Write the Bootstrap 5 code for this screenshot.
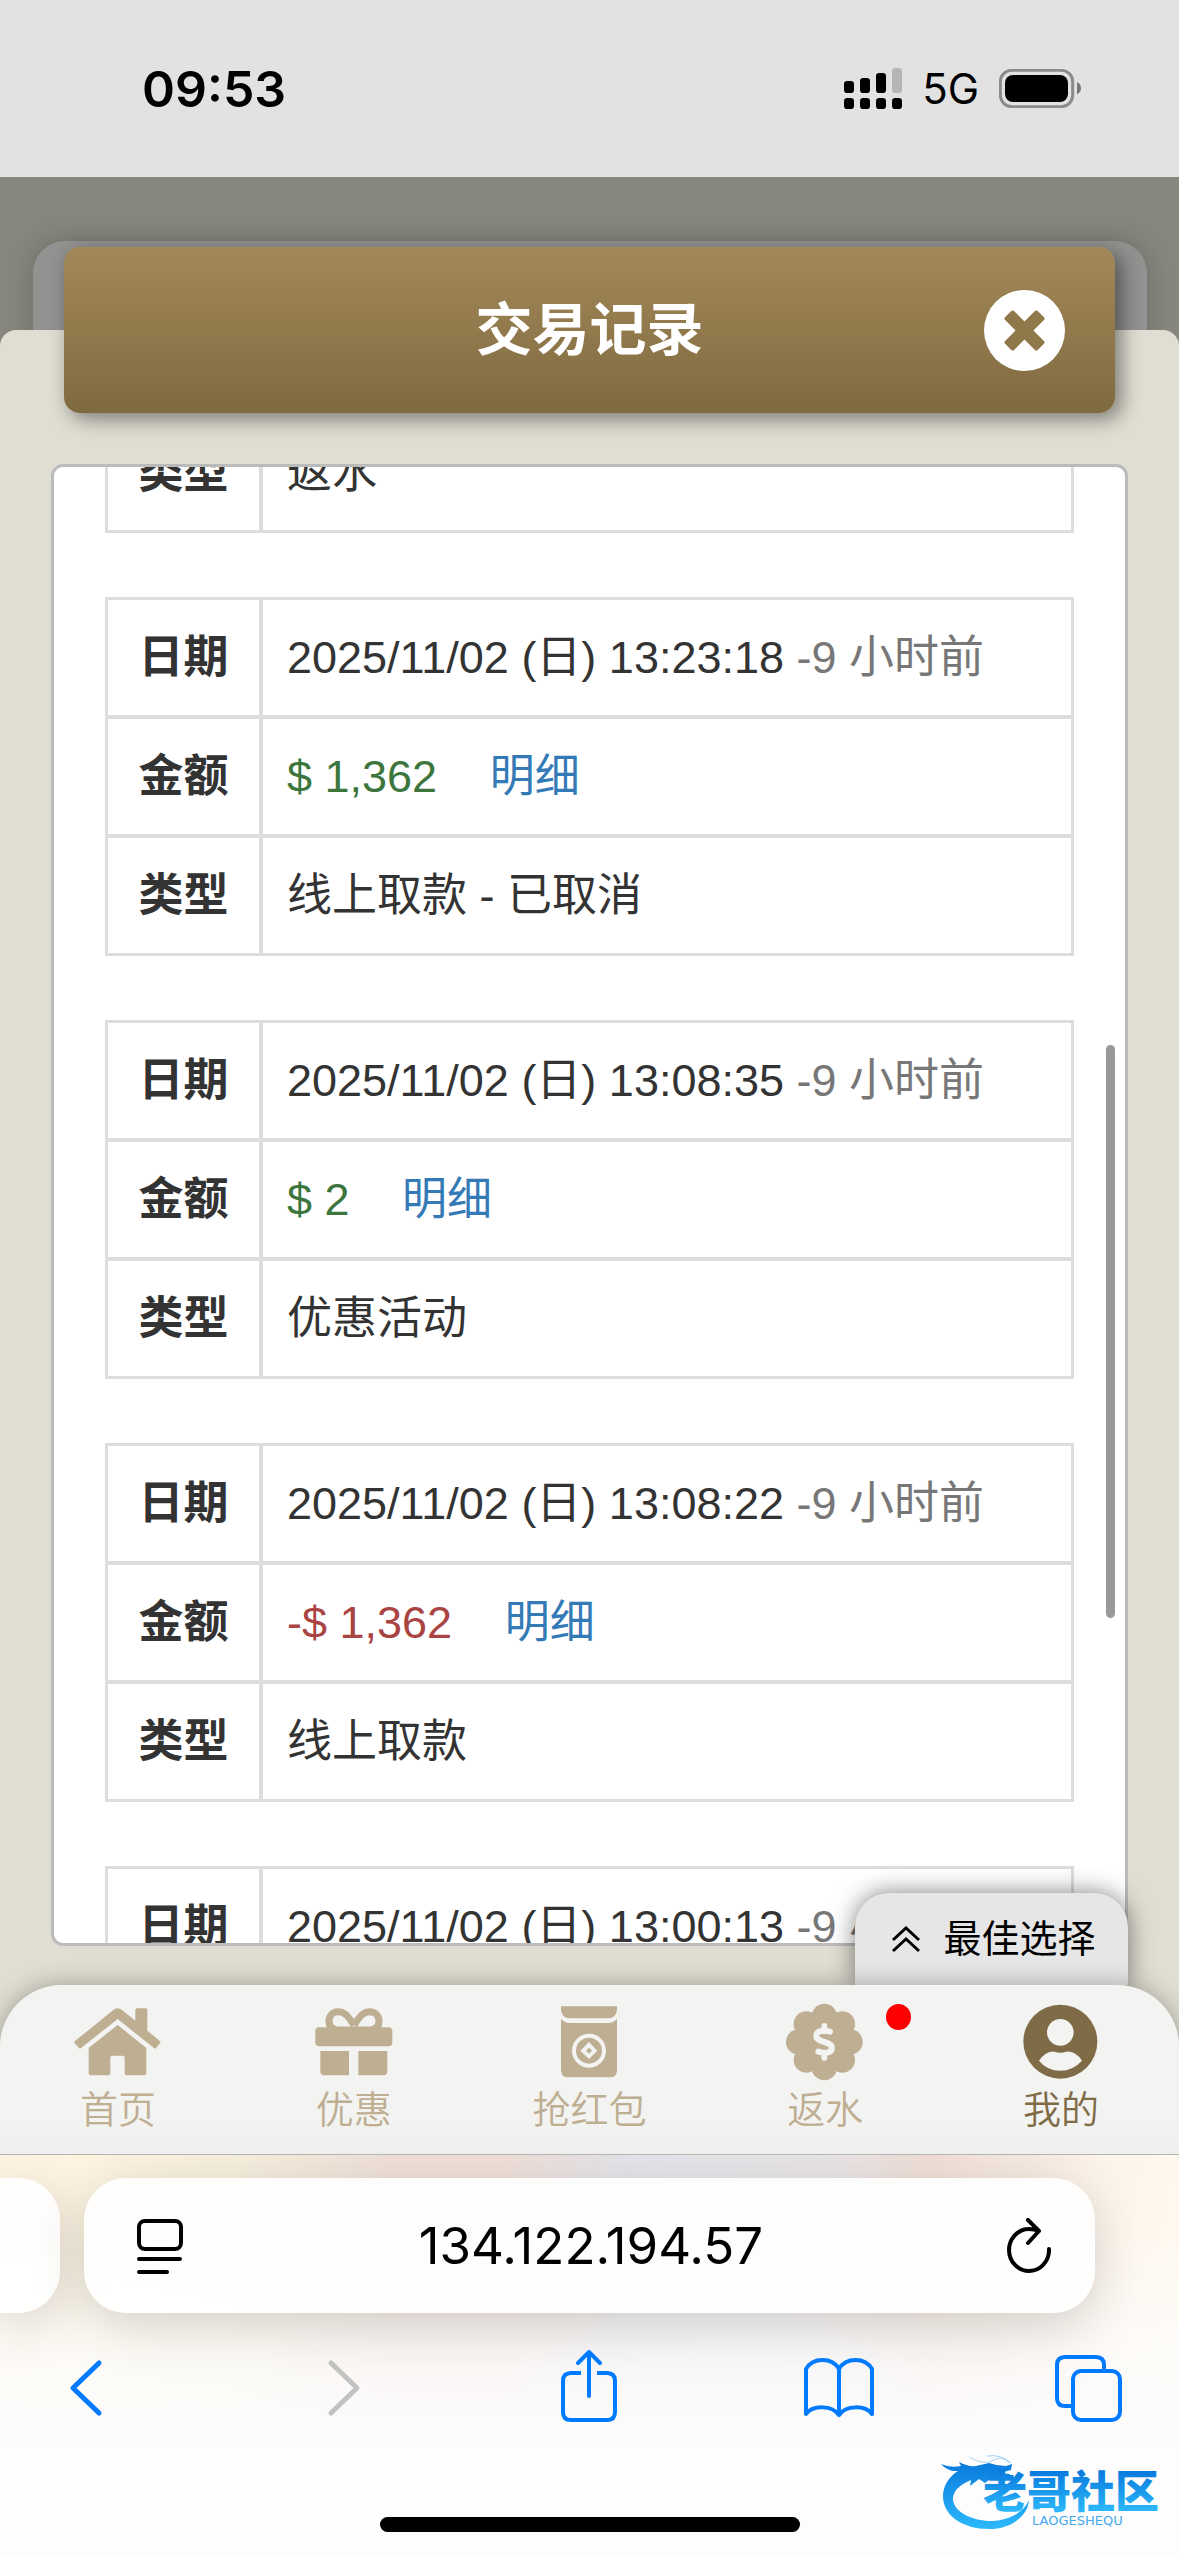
<!DOCTYPE html>
<html lang="zh-CN">
<head>
<meta charset="utf-8">
<meta name="viewport" content="width=device-width, initial-scale=1">
<title>交易记录</title>
<link href="https://cdn.jsdelivr.net/npm/bootstrap@5.3.0/dist/css/bootstrap.min.css" rel="stylesheet">
<style>
  body { font-family: "Liberation Sans", "Noto Sans CJK SC", sans-serif; color: #333; }
  svg { display: block; flex: none; }
  button { border: 0; background: none; padding: 0; }
  .app-shell { height: 100vh; overflow: hidden; background: #87877f; }
  .ios-font { font-family: Inter, "Liberation Sans", sans-serif; color: #000; }

  .status-strip { height: 177px; padding: 0 98px 0 142px; background: #e2e2e2; }
  .status-time { font-size: 50px; line-height: 60px; font-weight: 600; }
  .status-net { font-size: 42px; line-height: 48px; }

  .stage { padding-top: 70px; min-height: 0; }
  .under-sheet { position: absolute; top: 64px; left: 33px; right: 32px; height: 160px; border-radius: 32px 32px 0 0; background: #929291; box-shadow: 0 0 30px rgba(0,0,0,.2); }
  .title-bar { height: 166px; margin: 0 64px; padding: 0 50px; border-radius: 16px; background: linear-gradient(#a38959, #7f6a3f); box-shadow: 6px 6px 20px rgba(0,0,0,.45); z-index: 2; }
  .title-bar h1 { font-size: 57px; line-height: 64px; font-weight: 700; color: #fff; }
  .close-slot { width: 81px; }
  .sheet { margin-top: -83px; padding: 134px 51px 39px; border-radius: 16px 16px 0 0; background: #e0ded2; min-height: 0; position: relative; z-index: 1; }
  .record-panel { border: 3px solid #bbb; border-radius: 12px; background: #fff; min-height: 0; overflow: hidden; }
  .record-list { margin-top: -55px; padding: 0 51px; gap: 64px; }
  .scroll-thumb { position: absolute; right: 10px; top: 578px; width: 9px; height: 573px; border-radius: 5px; background: #999; }

  .record { width: 100%; flex: none; border: 3px solid #ddd; border-collapse: separate; border-spacing: 0; font-size: 45px; line-height: 58px; }
  .record th, .record td { height: 119px; padding: 0 24px; border-bottom: 4px solid #ddd; }
  .record tr:last-child > * { height: 115px; border-bottom: 0; }
  .record th { width: 155px; border-right: 4px solid #ddd; text-align: center; font-weight: 700; }
  .ago { color: #777; }
  .gain { color: #3c763d; }
  .loss { color: #a94442; }
  .record a { margin-left: 40px; color: #337ab7; text-decoration: none; }

  .dock { background: #e0ded2; z-index: 3; }
  .best-pick { position: absolute; right: 51px; bottom: 100%; width: 273px; height: 92px; padding-left: 4px; gap: 22px; border-radius: 34px 34px 0 0; background: #e6e6e6; color: #000; font-size: 38px; line-height: 46px; box-shadow: 0 0 24px rgba(0,0,0,.5); }
  .tab-row { padding: 18px 0 21px; border-radius: 62px 62px 0 0; background: linear-gradient(#f3f3f1 80%, #efefee); box-shadow: 0 0 24px rgba(0,0,0,.3); border-bottom: 1px solid #b4b4b4; z-index: 1; }
  .tab-link { gap: 4px; color: #beae92; font-size: 38px; line-height: 46px; font-weight: 350; text-decoration: none; }
  .tab-link.active { color: #7f6c47; }
  .dot { position: absolute; top: 1px; right: 32px; width: 25px; height: 26px; border-radius: 50%; background: #f00; }

  .browser { padding-top: 23px; overflow: hidden; z-index: 4;
    background: linear-gradient(rgba(253,253,253,0), rgba(253,253,253,.25) 90px, rgba(253,253,253,.7) 180px, #fdfdfd 290px), linear-gradient(90deg, #fff4e4 0, #fdf4e0 7%, #f7f0de 20%, #efe0d9 33%, #f0e0da 43%, #e4e4ea 53%, #e8e5e8 70%, #f0dfd7 79%, #fcf3e9 93%, #fff8ec 100%); }
  .url-row { gap: 24px; padding-right: 84px; }
  .pill { height: 135px; border-radius: 42px; background: rgba(255,255,255,.9); box-shadow: 0 12px 50px rgba(60,50,30,.2); }
  .pill-prev { width: 60px; border-radius: 0 42px 42px 0; }
  .pill-main { padding: 0 44px 0 53px; min-width: 0; }
  .url-box { border: 0; background: transparent; text-align: center; font-size: 51px; line-height: 60px; padding: 0 6px 0 0; min-width: 0; }
  .tool-row { margin-top: 35px; padding: 0 51px 0 46px; }
  .home-bar { width: 420px; height: 15px; border-radius: 8px; background: #000; margin: 89px auto 24px; }
  .mark-box { position: absolute; right: 15px; bottom: 24px; }
</style>
</head>
<body>
<div class="app-shell d-flex flex-column">
  <header class="status-strip ios-font d-flex align-items-center justify-content-between flex-shrink-0">
    <span class="status-time">09:53</span>
    <div class="d-flex align-items-center">
      <svg width="58" height="41" viewBox="78 81 174 123" aria-hidden="true">
        <rect x="78" y="120" width="30" height="36" rx="10"/><rect x="126" y="111" width="30" height="45" rx="10"/><rect x="174" y="96" width="30" height="60" rx="10"/><rect x="222" y="81" width="30" height="75" rx="10" fill="#b5b5b5"/>
        <rect x="78" y="171" width="30" height="33" rx="10"/><rect x="126" y="171" width="30" height="33" rx="10"/><rect x="174" y="171" width="30" height="33" rx="10"/><rect x="222" y="171" width="30" height="33" rx="10"/>
      </svg>
      <span class="status-net px-3 mx-1">5G</span>
      <svg width="82" height="39" viewBox="537 84 246 117" aria-hidden="true">
        <rect x="541" y="88" width="217" height="109" rx="34" fill="none" stroke="#8b8b8b" stroke-width="9"/><rect x="555" y="102" width="189" height="81" rx="24"/><path d="M771 123Q783 130 783 142Q783 154 771 160Z" fill="#777"/>
      </svg>
    </div>
  </header>

  <main class="stage position-relative d-flex flex-column flex-grow-1">
    <div class="under-sheet"></div>
    <div class="title-bar position-relative d-flex align-items-center flex-shrink-0">
      <span class="close-slot"></span>
      <h1 class="flex-grow-1 text-center m-0">交易记录</h1>
      <button type="button" class="close-slot" aria-label="关闭">
        <svg width="81" height="81" viewBox="-121 -121 242 242"><circle r="121" fill="#fff"/><g fill="#8f784a" transform="rotate(45)"><rect x="-69" y="-19" width="138" height="38" rx="6"/><rect x="-19" y="-69" width="38" height="138" rx="6"/></g></svg>
      </button>
    </div>
    <section class="sheet d-flex flex-column flex-grow-1">
      <div class="record-panel position-relative flex-grow-1">
        <div class="record-list d-flex flex-column">
          <table class="record"><tr><th scope="row">类型</th><td>返水</td></tr></table>
          <table class="record">
            <tr><th scope="row">日期</th><td>2025/11/02 (日) 13:23:18 <span class="ago">-9 小时前</span></td></tr>
            <tr><th scope="row">金额</th><td><span class="gain">$ 1,362</span> <a href="#">明细</a></td></tr>
            <tr><th scope="row">类型</th><td>线上取款 - 已取消</td></tr>
          </table>
          <table class="record">
            <tr><th scope="row">日期</th><td>2025/11/02 (日) 13:08:35 <span class="ago">-9 小时前</span></td></tr>
            <tr><th scope="row">金额</th><td><span class="gain">$ 2</span> <a href="#">明细</a></td></tr>
            <tr><th scope="row">类型</th><td>优惠活动</td></tr>
          </table>
          <table class="record">
            <tr><th scope="row">日期</th><td>2025/11/02 (日) 13:08:22 <span class="ago">-9 小时前</span></td></tr>
            <tr><th scope="row">金额</th><td><span class="loss">-$ 1,362</span> <a href="#">明细</a></td></tr>
            <tr><th scope="row">类型</th><td>线上取款</td></tr>
          </table>
          <table class="record">
            <tr><th scope="row">日期</th><td>2025/11/02 (日) 13:00:13 <span class="ago">-9 小时前</span></td></tr>
          </table>
        </div>
        <div class="scroll-thumb"></div>
      </div>
    </section>
  </main>

  <div class="dock position-relative flex-shrink-0">
    <button type="button" class="best-pick d-flex align-items-center justify-content-center">
      <svg width="30" height="28" viewBox="0 0 30 28" fill="none" stroke="#000" stroke-width="3"><path d="M2 15L15 3L28 15M2 26L15 14L28 26"/></svg>
      <span>最佳选择</span>
    </button>
    <nav class="tab-row position-relative row g-0">
      <a href="#" class="tab-link col d-flex flex-column align-items-center">
        <svg width="90" height="80" viewBox="218 131 270 240" fill="currentColor"><path d="M223 246L338 153Q352 141 366 153L405 184V152Q405 147 410 147H436Q441 147 441 152V214L479 246Q482 249 479 252L467 266Q464 269 461 266L352 179L242 266Q239 269 236 266L223 252Q220 249 223 246ZM352 197L438 266V342Q438 348 432 348H380Q373 348 373 342V295Q373 289 367 289H336Q330 289 330 295V342Q330 348 324 348H271Q265 348 265 342V266Z"/></svg>
        首页
      </a>
      <a href="#" class="tab-link col d-flex flex-column align-items-center">
        <svg width="90" height="80" viewBox="926 131 270 240" fill="currentColor"><rect x="945" y="204" width="231" height="57" rx="12"/><path d="M960 275H1046V348H974Q960 348 960 334ZM1074 275H1161V334Q1161 348 1147 348H1074Z"/><path d="M1061 198C1044 170 1032 157 1013 157C997 157 986 169 986 186C986 200 994 209 1010 212H1061M1061 198C1078 170 1090 157 1108 157C1124 157 1136 169 1136 186C1136 200 1128 209 1112 212H1061" fill="none" stroke="currentColor" stroke-width="21"/></svg>
        优惠
      </a>
      <a href="#" class="tab-link col d-flex flex-column align-items-center">
        <svg width="90" height="80" viewBox="435 131 270 240" fill="currentColor"><path d="M486 141H654V153Q650 177 628 177H512Q490 177 486 153ZM486 179Q498 191 512 191H628Q642 191 654 179V334Q652 354 634 354H506Q488 354 486 334Z"/><circle cx="570" cy="274" r="45" fill="none" stroke="#f3f3f1" stroke-width="12"/><path d="M570 248L595 274L570 299L544 274Z" fill="#f3f3f1"/><path d="M570 265L579 274L570 283L561 274Z"/></svg>
        抢红包
      </a>
      <a href="#" class="tab-link col position-relative d-flex flex-column align-items-center">
        <svg width="90" height="80" viewBox="-133 -117 270 240" fill="currentColor"><circle r="80"/><circle cy="-77" r="38"/><circle cy="77" r="38"/><circle cx="-77" r="38"/><circle cx="77" r="38"/><circle cx="-54" cy="-54" r="38"/><circle cx="54" cy="-54" r="38"/><circle cx="-54" cy="54" r="38"/><circle cx="54" cy="54" r="38"/><path d="M17 -31C-8 -38 -24 -32 -24 -18C-24 3 23 -4 23 18C23 34 -2 35 -18 29M0 -48V-32M0 32V47" fill="none" stroke="#f3f3f1" stroke-width="18" stroke-linecap="round"/></svg>
        返水
        <span class="dot"></span>
      </a>
      <a href="#" class="tab-link active col d-flex flex-column align-items-center">
        <svg width="90" height="80" viewBox="707 610 270 240"><circle cx="840" cy="726" r="111" fill="currentColor"/><g fill="#f3f3f1"><circle cx="840" cy="698" r="40"/><path d="M776 783Q797 754 822 756Q840 762 858 756Q885 754 905 783Q878 813 840 813Q800 813 776 783Z"/></g></svg>
        我的
      </a>
    </nav>
  </div>

  <footer class="browser ios-font position-relative flex-shrink-0">
    <div class="url-row d-flex">
      <div class="pill pill-prev flex-shrink-0"></div>
      <div class="pill pill-main flex-grow-1 d-flex align-items-center">
        <button type="button" aria-label="页面菜单">
          <svg width="46" height="56" viewBox="0 0 46 56" fill="none" stroke="#000" stroke-width="4" stroke-linecap="round"><rect x="2" y="3" width="42" height="28" rx="6"/><path d="M2 41H43M2 54H30"/></svg>
        </button>
        <input class="url-box ios-font flex-grow-1" type="text" value="134.122.194.57" aria-label="地址">
        <button type="button" aria-label="重新加载">
          <svg width="46" height="56" viewBox="0 0 46 56" fill="none" stroke="#000" stroke-width="4" stroke-linecap="round" stroke-linejoin="round"><path d="M44 31A20 21 0 1 1 24 11Q29 11 34 13M23 2L34 13L23 25"/></svg>
        </button>
      </div>
    </div>
    <div class="tool-row d-flex justify-content-between">
      <button type="button" aria-label="后退"><svg width="80" height="80" viewBox="0 0 80 80" fill="none" stroke="#007aff" stroke-width="5" stroke-linecap="round" stroke-linejoin="round"><path d="M53 15L27 40L53 65"/></svg></button>
      <button type="button" aria-label="前进" disabled><svg width="80" height="80" viewBox="0 0 80 80" fill="none" stroke="#c2c2c0" stroke-width="5" stroke-linecap="round" stroke-linejoin="round"><path d="M34 15L60 40L34 65"/></svg></button>
      <button type="button" aria-label="分享"><svg width="80" height="80" viewBox="0 0 80 80" fill="none" stroke="#007aff" stroke-width="4" stroke-linecap="round" stroke-linejoin="round"><path d="M42 48V4M31 15L42 4L53 15"/><path d="M34 25H24Q16 25 16 33V64Q16 72 24 72H60Q68 72 68 64V33Q68 25 60 25H50" stroke-linecap="butt"/></svg></button>
      <button type="button" aria-label="书签"><svg width="80" height="80" viewBox="0 0 80 80" fill="none" stroke="#007aff" stroke-width="4" stroke-linecap="round" stroke-linejoin="round"><path d="M41 21C34 9 15 9 8 21V66C15 57 34 57 41 67C48 57 67 57 74 66V21C67 9 48 9 41 21ZM41 21V66"/></svg></button>
      <button type="button" aria-label="标签页"><svg width="80" height="80" viewBox="0 0 80 80" fill="none" stroke="#007aff" stroke-width="4"><path d="M25 58H17Q9 58 9 50V17Q9 9 17 9H48Q56 9 56 17V23"/><rect x="25" y="23" width="47" height="49" rx="8"/></svg></button>
    </div>
    <div class="home-bar"></div>
    <svg class="mark-box" width="224" height="78" viewBox="0 0 224 78" role="img" aria-label="老哥社区">
      <defs><linearGradient id="sea" gradientUnits="userSpaceOnUse" x1="0" y1="6" x2="0" y2="74"><stop offset="0" stop-color="#0878dc"/><stop offset="1" stop-color="#2cb8fb"/></linearGradient>
      <linearGradient id="seaText" x1="0" y1="0" x2="0" y2="1"><stop offset=".2" stop-color="#0878dc"/><stop offset=".85" stop-color="#2cb8fb"/></linearGradient></defs>
      <path fill="url(#sea)" d="M1 10Q10 14 21 12L19 8Q28 13 36 12L49 9Q57 12 66 12L72 10L71 16L60 19L70 20L68 24L57 22L62 27L50 25L45 29L39 25L30 32L31 26Q12 34 13 46C15 60 35 67 52 67C70 66 84 58 89 46C88 62 71 75 49 75C23 75 3 62 3 42C3 31 10 22 18 17Q8 18 1 10Z"/>
      <path fill="none" stroke="#2595e8" stroke-width="1" opacity=".4" d="M29 3Q44 12 54 6Q61 1 71 9M47 2Q62 0 70 9"/>
      <text x="43" y="54" font-family="Noto Sans CJK SC, sans-serif" font-weight="900" font-size="44" fill="url(#seaText)">老哥社区</text>
      <text x="92" y="71" font-family="DejaVu Sans, sans-serif" font-size="13" fill="#45a9ec">LAOGESHEQU</text>
    </svg>
  </footer>
</div>
<script src="https://cdn.jsdelivr.net/npm/bootstrap@5.3.0/dist/js/bootstrap.bundle.min.js"></script>
</body>
</html>
